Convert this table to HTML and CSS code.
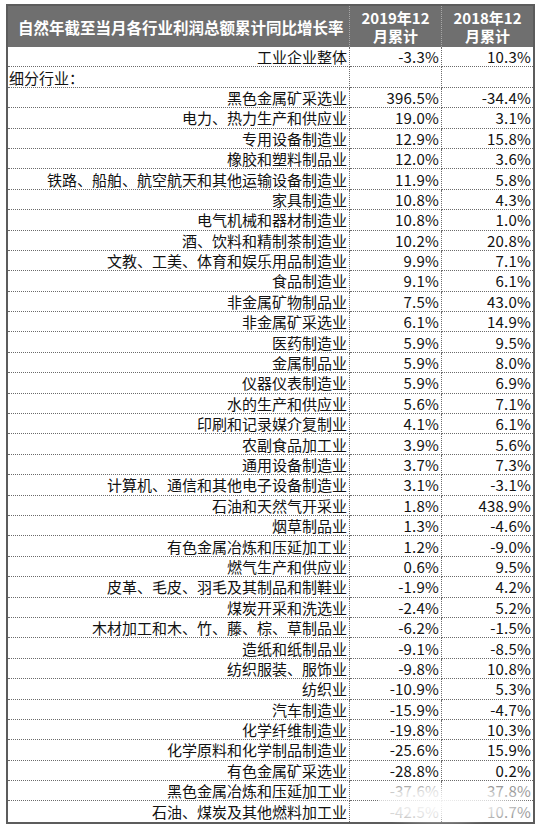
FILE: index.html
```html
<!DOCTYPE html>
<html lang="zh">
<head>
<meta charset="utf-8">
<link rel="stylesheet" href="styles.css">
</head>
<body>
<div class="sheet">
  <div class="head">
    <div class="hcell title">自然年截至当月各行业利润总额累计同比增长率</div>
    <div class="hcell year"><span class="yl">2019年12</span><span class="yl">月累计</span></div>
    <div class="hcell year last"><span class="yl">2018年12</span><span class="yl">月累计</span></div>
  </div>
  <div class="grid">
    <div class="c name">工业企业整体</div><div class="c num">-3.3%</div><div class="c num last">10.3%</div>
    <div class="c name left">细分行业：</div><div class="c num"></div><div class="c num last"></div>
    <div class="c name">黑色金属矿采选业</div><div class="c num">396.5%</div><div class="c num last">-34.4%</div>
    <div class="c name">电力、热力生产和供应业</div><div class="c num">19.0%</div><div class="c num last">3.1%</div>
    <div class="c name">专用设备制造业</div><div class="c num">12.9%</div><div class="c num last">15.8%</div>
    <div class="c name">橡胶和塑料制品业</div><div class="c num">12.0%</div><div class="c num last">3.6%</div>
    <div class="c name">铁路、船舶、航空航天和其他运输设备制造业</div><div class="c num">11.9%</div><div class="c num last">5.8%</div>
    <div class="c name">家具制造业</div><div class="c num">10.8%</div><div class="c num last">4.3%</div>
    <div class="c name">电气机械和器材制造业</div><div class="c num">10.8%</div><div class="c num last">1.0%</div>
    <div class="c name">酒、饮料和精制茶制造业</div><div class="c num">10.2%</div><div class="c num last">20.8%</div>
    <div class="c name">文教、工美、体育和娱乐用品制造业</div><div class="c num">9.9%</div><div class="c num last">7.1%</div>
    <div class="c name">食品制造业</div><div class="c num">9.1%</div><div class="c num last">6.1%</div>
    <div class="c name">非金属矿物制品业</div><div class="c num">7.5%</div><div class="c num last">43.0%</div>
    <div class="c name">非金属矿采选业</div><div class="c num">6.1%</div><div class="c num last">14.9%</div>
    <div class="c name">医药制造业</div><div class="c num">5.9%</div><div class="c num last">9.5%</div>
    <div class="c name">金属制品业</div><div class="c num">5.9%</div><div class="c num last">8.0%</div>
    <div class="c name">仪器仪表制造业</div><div class="c num">5.9%</div><div class="c num last">6.9%</div>
    <div class="c name">水的生产和供应业</div><div class="c num">5.6%</div><div class="c num last">7.1%</div>
    <div class="c name">印刷和记录媒介复制业</div><div class="c num">4.1%</div><div class="c num last">6.1%</div>
    <div class="c name">农副食品加工业</div><div class="c num">3.9%</div><div class="c num last">5.6%</div>
    <div class="c name">通用设备制造业</div><div class="c num">3.7%</div><div class="c num last">7.3%</div>
    <div class="c name">计算机、通信和其他电子设备制造业</div><div class="c num">3.1%</div><div class="c num last">-3.1%</div>
    <div class="c name">石油和天然气开采业</div><div class="c num">1.8%</div><div class="c num last">438.9%</div>
    <div class="c name">烟草制品业</div><div class="c num">1.3%</div><div class="c num last">-4.6%</div>
    <div class="c name">有色金属冶炼和压延加工业</div><div class="c num">1.2%</div><div class="c num last">-9.0%</div>
    <div class="c name">燃气生产和供应业</div><div class="c num">0.6%</div><div class="c num last">9.5%</div>
    <div class="c name">皮革、毛皮、羽毛及其制品和制鞋业</div><div class="c num">-1.9%</div><div class="c num last">4.2%</div>
    <div class="c name">煤炭开采和洗选业</div><div class="c num">-2.4%</div><div class="c num last">5.2%</div>
    <div class="c name">木材加工和木、竹、藤、棕、草制品业</div><div class="c num">-6.2%</div><div class="c num last">-1.5%</div>
    <div class="c name">造纸和纸制品业</div><div class="c num">-9.1%</div><div class="c num last">-8.5%</div>
    <div class="c name">纺织服装、服饰业</div><div class="c num">-9.8%</div><div class="c num last">10.8%</div>
    <div class="c name">纺织业</div><div class="c num">-10.9%</div><div class="c num last">5.3%</div>
    <div class="c name">汽车制造业</div><div class="c num">-15.9%</div><div class="c num last">-4.7%</div>
    <div class="c name">化学纤维制造业</div><div class="c num">-19.8%</div><div class="c num last">10.3%</div>
    <div class="c name">化学原料和化学制品制造业</div><div class="c num">-25.6%</div><div class="c num last">15.9%</div>
    <div class="c name">有色金属矿采选业</div><div class="c num">-28.8%</div><div class="c num last">0.2%</div>
    <div class="c name">黑色金属冶炼和压延加工业</div><div class="c num faded">-37.6%</div><div class="c num last faded">37.8%</div>
    <div class="c name end">石油、煤炭及其他燃料加工业</div><div class="c num end faded">-42.5%</div><div class="c num last end faded">10.7%</div>
  </div>
  <div class="mark"></div>
</div>
</body>
</html>
```

FILE: styles.css
```css
html, body {
  margin: 0;
  padding: 0;
  background: #ffffff;
}
body {
  font-family: "Noto Sans CJK SC", "Noto Sans", sans-serif;
  color: #111111;
}
.sheet {
  position: relative;
  margin: 4px 0 0 6px;
  width: 529px;
  border: 2px solid #5c5c5c;
  box-sizing: border-box;
  background: #fff;
}
.head {
  display: grid;
  grid-template-columns: 342px 92px 1fr;
  height: 41px;
  background: #6f6f6f;
  color: #fff;
  font-weight: bold;
  font-size: 15px;
}
.hcell {
  display: flex;
  align-items: center;
  border-right: 1px dotted #a8a8a8;
}
.hcell.title {
  padding-left: 10px;
  font-size: 15.5px;
}
.hcell.year {
  flex-direction: column;
  justify-content: center;
  align-items: center;
  font-size: 15px;
}
.yl {
  display: block;
  height: 18px;
  line-height: 18px;
}
.hcell.last {
  border-right: none;
}
.grid {
  display: grid;
  grid-template-columns: 342px 92px 1fr;
  grid-auto-rows: 20.4px;
  font-size: 15px;
}
.c {
  box-sizing: border-box;
  border-bottom: 1px dotted #6a6a6a;
  border-right: 1px dotted #6a6a6a;
  display: flex;
  align-items: center;
  justify-content: flex-end;
  padding-right: 2px;
  line-height: 1;
  white-space: nowrap;
}
.c.num {
  letter-spacing: 0.2px;
}
.c.left {
  justify-content: flex-start;
  padding-left: 1px;
}
.c.last {
  border-right: none;
}
.c.end {
  border-bottom: none;
}
.faded {
  color: #9a9a9a;
}
.mark {
  position: absolute;
  left: 370px;
  top: 778px;
  width: 150px;
  height: 40px;
  background: radial-gradient(ellipse at 40% 50%, rgba(255,255,255,0.95) 0%, rgba(255,255,255,0.7) 45%, rgba(255,255,255,0) 75%);
  pointer-events: none;
}
```
